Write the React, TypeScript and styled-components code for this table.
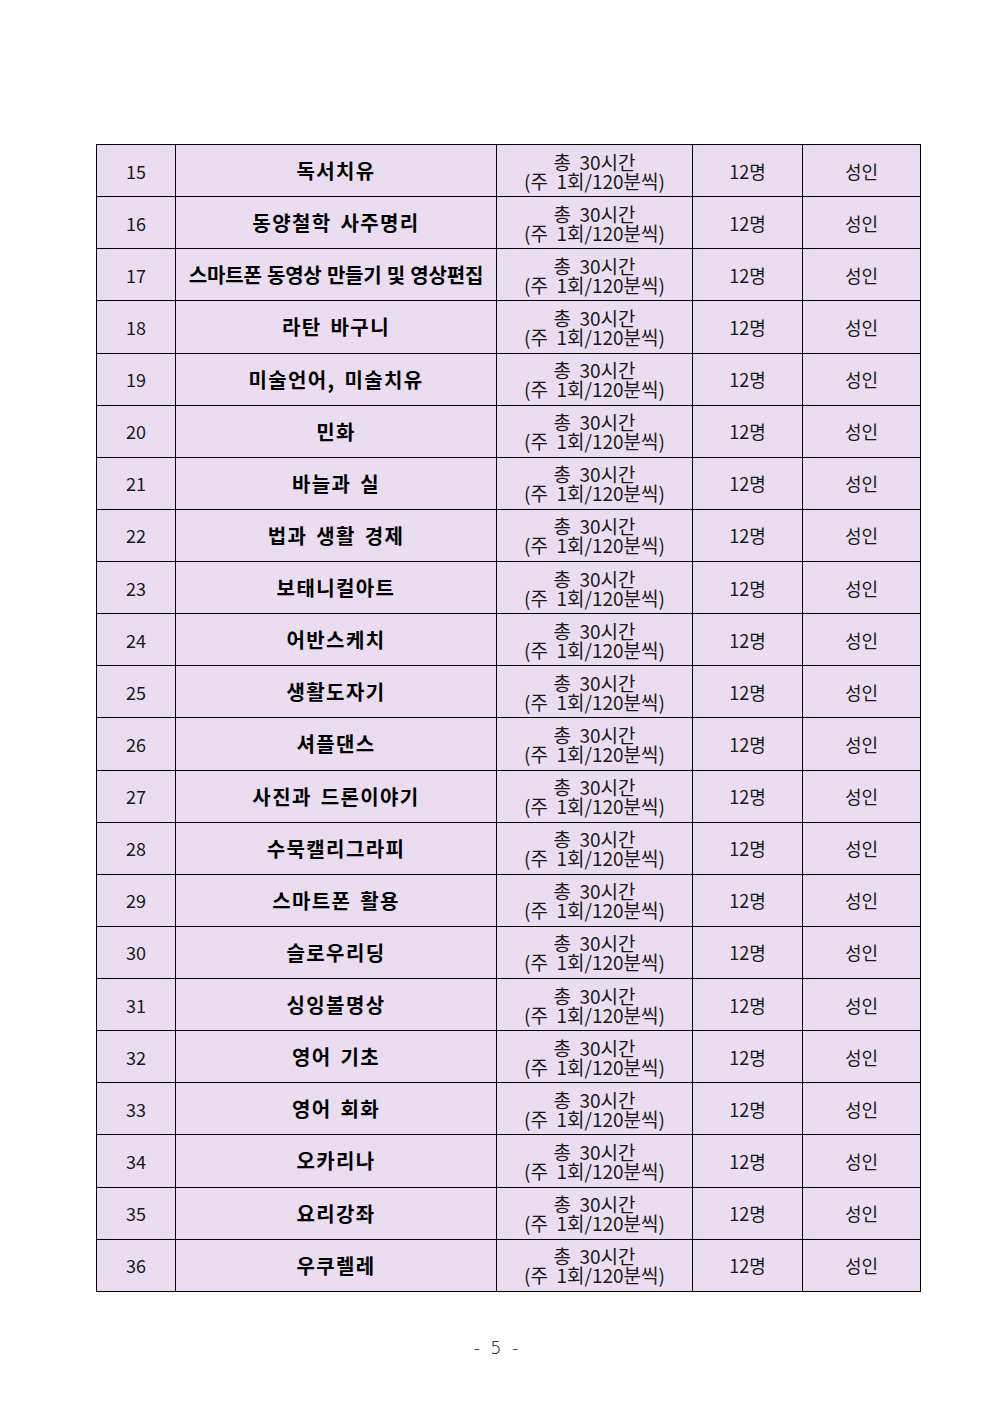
import React from "react";
import styled, { createGlobalStyle } from "styled-components";

const Global = createGlobalStyle`
  html, body { margin: 0; padding: 0; background: #fff; }
  body { font-family: "Noto Sans CJK KR", "Noto Sans", sans-serif; color: #000; }
`;

const Page = styled.div`
  width: 992px;
  height: 1403px;
  box-sizing: border-box;
  padding-top: 144px;
  display: flex;
  flex-direction: column;
  align-items: flex-start;
`;

const Table = styled.table`
  margin-left: 96px;
  border-collapse: collapse;
  table-layout: fixed;
  width: 824px;
  background: #e9ddef;
`;

const Col = styled.col<{ $w: number }>`
  width: ${(p) => p.$w}px;
`;

const Row = styled.tr`
  height: 52.14px;
`;

const Cell = styled.td<{ $size?: number }>`
  border: 1px solid #000;
  padding: 0;
  text-align: center;
  vertical-align: middle;
  font-size: ${(p) => p.$size ?? 18}px;
  color: #1a1a1a;
  white-space: pre;
`;

const TitleCell = styled.td<{ $long?: boolean }>`
  border: 1px solid #000;
  padding: 0;
  text-align: center;
  vertical-align: middle;
  font-weight: 700;
  color: #000;
  white-space: pre;
  font-size: 20px;
  letter-spacing: ${(p) => (p.$long ? "-0.2px" : "1.4px")};
  word-spacing: ${(p) => (p.$long ? "1px" : "3px")};
`;

const Line = styled.div`
  line-height: 19px;
  font-size: 19px;
`;

const Footer = styled.div`
  width: 992px;
  margin-top: 46px;
  box-sizing: border-box;
  text-align: center;
  font-family: "DejaVu Sans", sans-serif;
  font-weight: 300;
  font-size: 17px;
  white-space: pre;
  color: #000;
`;

const titles: [number, string][] = [
  [15, "독서치유"],
  [16, "동양철학 사주명리"],
  [17, "스마트폰 동영상 만들기 및 영상편집"],
  [18, "라탄 바구니"],
  [19, "미술언어, 미술치유"],
  [20, "민화"],
  [21, "바늘과 실"],
  [22, "법과 생활 경제"],
  [23, "보태니컬아트"],
  [24, "어반스케치"],
  [25, "생활도자기"],
  [26, "셔플댄스"],
  [27, "사진과 드론이야기"],
  [28, "수묵캘리그라피"],
  [29, "스마트폰 활용"],
  [30, "슬로우리딩"],
  [31, "싱잉볼명상"],
  [32, "영어 기초"],
  [33, "영어 회화"],
  [34, "오카리나"],
  [35, "요리강좌"],
  [36, "우쿠렐레"],
];

export default function App() {
  return (
    <Page>
      <Global />
      <Table>
        <colgroup>
          <Col $w={79} />
          <Col $w={321} />
          <Col $w={196} />
          <Col $w={110} />
          <Col $w={118} />
        </colgroup>
        <tbody>
          {titles.map(([n, t]) => (
            <Row key={n}>
              <Cell>{n}</Cell>
              <TitleCell $long={t.length > 12}>{t}</TitleCell>
              <Cell>
                <Line>{"총  30시간"}</Line>
                <Line>{"(주  1회/120분씩)"}</Line>
              </Cell>
              <Cell>12명</Cell>
              <Cell>성인</Cell>
            </Row>
          ))}
        </tbody>
      </Table>
      <Footer>{"-  5  -"}</Footer>
    </Page>
  );
}
